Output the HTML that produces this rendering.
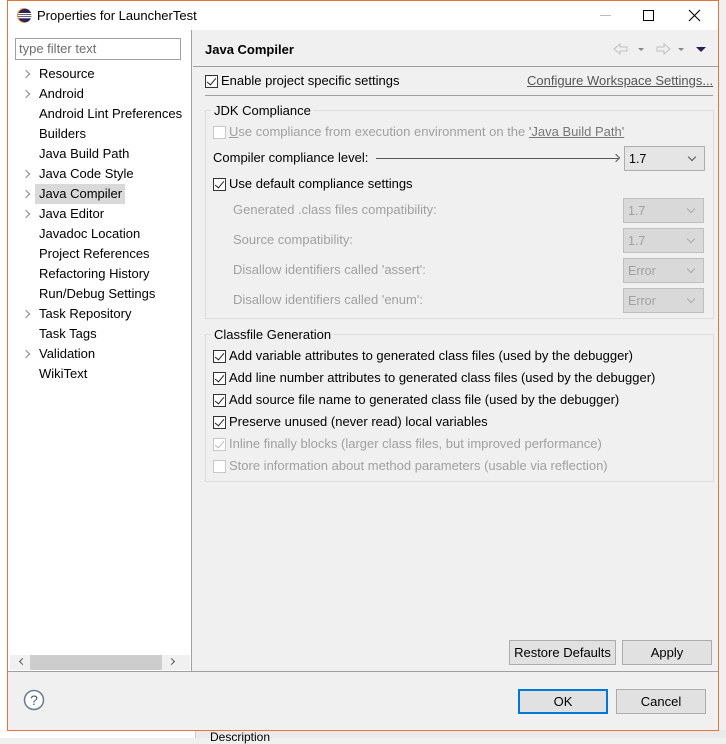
<!DOCTYPE html>
<html><head><meta charset="utf-8"><style>
*{margin:0;padding:0;box-sizing:border-box}
body{width:726px;height:738px;overflow:hidden;background:#f0f0f0;font-family:"Liberation Sans",sans-serif;font-size:12.5px;color:#000;position:relative}
.a{position:absolute;white-space:nowrap}
.t{line-height:16px}
.cb{position:absolute;width:13px;height:13px;border:1px solid #333;background:#fff}
.cb.on::after{content:"";position:absolute;left:3px;top:0px;width:4px;height:8px;border:solid #222;border-width:0 1.5px 1.5px 0;transform:rotate(40deg)}
.cb.dis{border-color:#c8c8c8}
.cb.dis.on::after{border-color:#bbb}
.g{color:#a0a0a0}
.combo{position:absolute;width:81px;height:25px;border:1px solid #adadad;background:#e5e5e5;padding:5px 0 0 4px;line-height:14px}
.combo.d{border-color:#bfbfbf;background:#d9d9d9;color:#a0a0a0}
.combo::after{content:"";position:absolute;right:9px;top:7px;width:5px;height:5px;border:solid #555;border-width:0 1px 1px 0;transform:rotate(45deg)}
.combo.d::after{border-color:#aaa}
.btn{position:absolute;height:25px;border:1px solid #adadad;background:#e1e1e1;text-align:center;line-height:23px}
.arr{position:absolute;width:6px;height:6px;border:solid #888;border-width:1px 1px 0 0;transform:rotate(45deg)}
.grp{position:absolute;border:1px solid #dcdcdc}
.gt{position:absolute;background:#f0f0f0;padding:0 3px;line-height:16px}
</style></head><body>
<div class="a" style="left:0;top:0;width:7px;height:738px;background:#fff"></div>
<div class="a" style="left:0;top:730px;width:726px;height:8px;background:#fff"></div>
<div class="a" style="left:195px;top:730px;width:531px;height:8px;background:#eaeaea;border-left:1px solid #ccc"></div>
<div class="a" style="left:210px;top:730px;font-size:12px;line-height:14px">Description</div>
<div class="a" style="left:7px;top:0;width:712px;height:731px;border:1px solid #e8743b;background:#f0f0f0"></div>
<div class="a" style="left:8px;top:1px;width:710px;height:29px;background:#fff"></div>
<svg class="a" style="left:17px;top:8px" width="15" height="15" viewBox="0 0 15 15"><circle cx="7.5" cy="7.5" r="7" fill="#2c2255"/><rect x="0" y="5" width="15" height="1.3" fill="#fff"/><rect x="0" y="7" width="15" height="1.3" fill="#fff"/><rect x="0" y="9" width="15" height="1.3" fill="#fff"/><path d="M7.5 0.5a7 7 0 0 0 0 14" fill="none" stroke="#f7941e" stroke-width="1"/></svg>
<div class="a t" style="left:37px;top:8px;font-size:13px">Properties for LauncherTest</div>
<div class="a" style="left:600px;top:15px;width:11px;height:1px;background:#bbb"></div>
<div class="a" style="left:643px;top:10px;width:11px;height:11px;border:1px solid #000"></div>
<svg class="a" style="left:688px;top:9px" width="13" height="13"><path d="M1 1L12 12M12 1L1 12" stroke="#000" stroke-width="1.1"/></svg>
<div class="a" style="left:8px;top:30px;width:183px;height:641px;background:#fff"></div>
<div class="a" style="left:191px;top:30px;width:1px;height:641px;background:#a0a0a0"></div>
<div class="a" style="left:15px;top:38px;width:166px;height:22px;border:1px solid #a0a0a0;background:#fff;color:#6d6d6d;padding:3px 0 0 3px;font-size:13px;line-height:14px">type filter text</div>
<div class="a" style="left:35px;top:184px;width:90px;height:20px;background:#d9d9d9"></div>
<div class="a arr" style="left:23px;top:71px"></div>
<div class="a arr" style="left:23px;top:91px"></div>
<div class="a arr" style="left:23px;top:171px"></div>
<div class="a arr" style="left:23px;top:191px"></div>
<div class="a arr" style="left:23px;top:211px"></div>
<div class="a arr" style="left:23px;top:311px"></div>
<div class="a arr" style="left:23px;top:351px"></div>
<div class="a t" style="left:39px;top:64px;line-height:20px;font-size:13px">Resource<br>Android<br>Android Lint Preferences<br>Builders<br>Java Build Path<br>Java Code Style<br>Java Compiler<br>Java Editor<br>Javadoc Location<br>Project References<br>Refactoring History<br>Run/Debug Settings<br>Task Repository<br>Task Tags<br>Validation<br>WikiText</div>
<div class="a" style="left:10px;top:655px;width:180px;height:15px;background:#f0f0f0"></div>
<div class="a" style="left:30px;top:655px;width:132px;height:15px;background:#cdcdcd"></div>
<div class="a" style="left:20px;top:659px;width:5px;height:5px;border:solid #555;border-width:0 0 1px 1px;transform:rotate(45deg)"></div>
<div class="a" style="left:169px;top:659px;width:5px;height:5px;border:solid #555;border-width:1px 1px 0 0;transform:rotate(45deg)"></div>
<div class="a t" style="left:205px;top:42px;font-weight:bold;font-size:13px">Java Compiler</div>
<svg class="a" style="left:612px;top:42px" width="100" height="14"><path d="M2 7L8 2V5H15V9H8V12Z" fill="none" stroke="#c0c0c0"/><path d="M26 6h6l-3 3z" fill="#888"/><path d="M58 7L52 2V5H45V9H52V12Z" fill="none" stroke="#c0c0c0"/><path d="M66 6h6l-3 3z" fill="#888"/><path d="M84 5h10l-5 5z" fill="#2a1f4f"/></svg>
<div class="a" style="left:193px;top:66px;width:525px;height:1px;background:#a0a0a0"></div>
<div class="cb on" style="left:205px;top:75px"></div>
<div class="a t" style="left:221px;top:73px;font-size:13px">Enable project specific settings</div>
<div class="a t" style="left:527px;top:73px;font-size:13px;color:#555;text-decoration:underline">Configure Workspace Settings...</div>
<div class="a" style="left:205px;top:95px;width:508px;height:1px;background:#a0a0a0"></div>
<div class="grp" style="left:205px;top:110px;width:509px;height:209px"></div>
<div class="gt" style="left:211px;top:103px;font-size:13px">JDK Compliance</div>
<div class="cb dis" style="left:213px;top:126px"></div>
<div class="a t g" style="left:229px;top:124px;font-size:13px"><u>U</u>se compliance from execution environment on the <u style="color:#777">'Java Build Path'</u></div>
<div class="a t" style="left:213px;top:150px;font-size:13px">Compiler compliance level:</div>
<div class="a" style="left:376px;top:158px;width:242px;height:1px;background:#555"></div>
<div class="a" style="left:613px;top:155px;width:6px;height:6px;border:solid #555;border-width:1px 1px 0 0;transform:rotate(45deg)"></div>
<div class="combo" style="left:624px;top:146px">1.7</div>
<div class="cb on" style="left:213px;top:178px"></div>
<div class="a t" style="left:229px;top:176px;font-size:13px">Use default compliance settings</div>
<div class="a t g" style="left:233px;top:202px;font-size:13px">Generated .class files compatibility:</div>
<div class="combo d" style="left:623px;top:198px">1.7</div>
<div class="a t g" style="left:233px;top:232px;font-size:13px">Source compatibility:</div>
<div class="combo d" style="left:623px;top:228px">1.7</div>
<div class="a t g" style="left:233px;top:262px;font-size:13px">Disallow identifiers called 'assert':</div>
<div class="combo d" style="left:623px;top:258px">Error</div>
<div class="a t g" style="left:233px;top:292px;font-size:13px">Disallow identifiers called 'enum':</div>
<div class="combo d" style="left:623px;top:288px">Error</div>
<div class="grp" style="left:205px;top:334px;width:509px;height:148px"></div>
<div class="gt" style="left:211px;top:327px;font-size:13px">Classfile Generation</div>
<div class="cb on" style="left:213px;top:350px"></div>
<div class="a t" style="left:229px;top:348px;font-size:13px">Add variable attributes to generated class files (used by the debugger)</div>
<div class="cb on" style="left:213px;top:372px"></div>
<div class="a t" style="left:229px;top:370px;font-size:13px">Add line number attributes to generated class files (used by the debugger)</div>
<div class="cb on" style="left:213px;top:394px"></div>
<div class="a t" style="left:229px;top:392px;font-size:13px">Add source file name to generated class file (used by the debugger)</div>
<div class="cb on" style="left:213px;top:416px"></div>
<div class="a t" style="left:229px;top:414px;font-size:13px">Preserve unused (never read) local variables</div>
<div class="cb dis on" style="left:213px;top:438px"></div>
<div class="a t g" style="left:229px;top:436px;font-size:13px">Inline finally blocks (larger class files, but improved performance)</div>
<div class="cb dis" style="left:213px;top:460px"></div>
<div class="a t g" style="left:229px;top:458px;font-size:13px">Store information about method parameters (usable via reflection)</div>
<div class="btn" style="left:509px;top:640px;width:107px;font-size:13px">Restore Defaults</div>
<div class="btn" style="left:622px;top:640px;width:90px;font-size:13px">Apply</div>
<div class="a" style="left:8px;top:671px;width:710px;height:1px;background:#a0a0a0"></div>
<svg class="a" style="left:23px;top:689px" width="22" height="22"><circle cx="11" cy="11" r="9.5" fill="#fff" stroke="#6a7a8e" stroke-width="1.5"/><text x="11" y="16" font-family="Liberation Sans" font-size="14" text-anchor="middle" fill="#4a5a70">?</text></svg>
<div class="btn" style="left:518px;top:689px;width:90px;border:2px solid #0078d7;font-size:13px;line-height:21px">OK</div>
<div class="btn" style="left:616px;top:689px;width:90px;font-size:13px">Cancel</div>
</body></html>
